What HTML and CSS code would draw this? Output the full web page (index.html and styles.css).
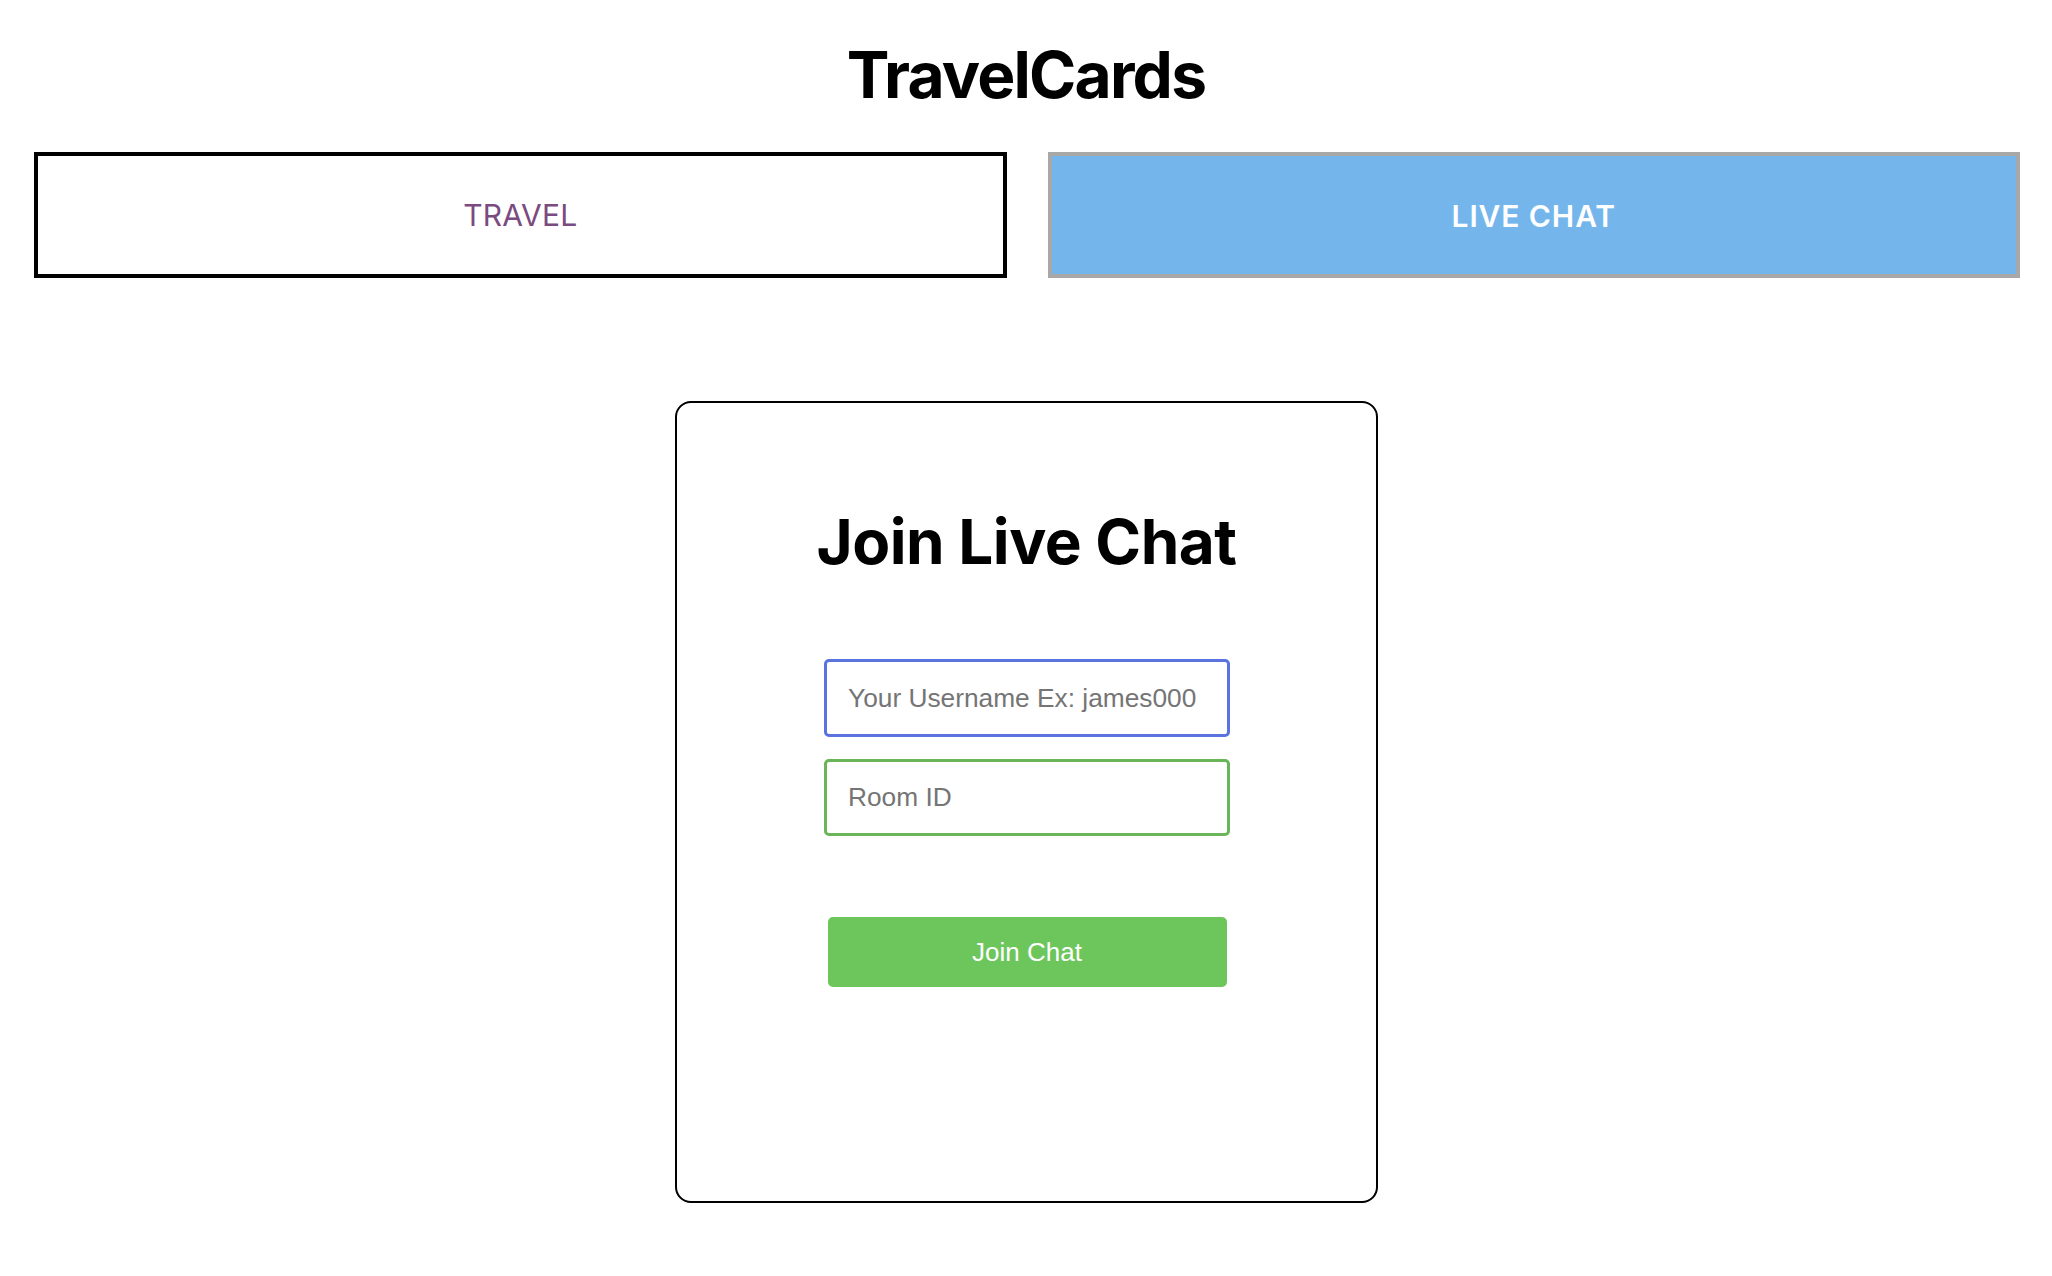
FILE: index.html
```html
<!DOCTYPE html>
<html lang="en">
<head>
<meta charset="utf-8">
<title>TravelCards</title>
<link rel="stylesheet" href="styles.css">
</head>
<body>
<header class="site-header">
  <h1 class="site-title">TravelCards</h1>
</header>
<nav class="tabs">
  <button class="tab tab-travel" type="button">TRAVEL</button>
  <button class="tab tab-chat" type="button">LIVE CHAT</button>
</nav>
<main class="main">
  <section class="card">
    <h2 class="card-title">Join Live Chat</h2>
    <form class="join-form">
      <input class="field field-user" type="text" placeholder="Your Username Ex: james000">
      <input class="field field-room" type="text" placeholder="Room ID">
      <button class="join-btn" type="button">Join Chat</button>
    </form>
  </section>
</main>
</body>
</html>
```
FILE: styles.css
```css
* { box-sizing: border-box; }

html, body {
  margin: 0;
  padding: 0;
  background: #ffffff;
}

body {
  font-family: Inter, "Liberation Sans", sans-serif;
  color: #000;
}

.site-header {
  padding-top: 35px;
  display: flex;
  justify-content: center;
}

.site-title {
  margin: 0;
  font-family: Inter, sans-serif;
  font-weight: 700;
  font-size: 64px;
  line-height: 80px;
  letter-spacing: -1.8px;
}

.tabs {
  display: flex;
  gap: 41px;
  padding: 0 32px 0 34px;
  margin-top: 37px;
}

.tab {
  flex: 1 1 0;
  height: 126px;
  font-family: Inter, sans-serif;
  font-size: 30px;
  cursor: pointer;
  padding: 0;
}

.tab-travel {
  background: #ffffff;
  border: 4px solid #000000;
  color: #7a4a80;
  font-weight: 400;
  letter-spacing: 0.2px;
}

.tab-chat {
  background: #74b6ec;
  border: 4px solid #a8a8a8;
  color: #ffffff;
  font-weight: 600;
  letter-spacing: 0.9px;
  padding-top: 2px;
}

.main {
  display: flex;
  justify-content: center;
  padding-top: 123px;
  padding-left: 1px;
}

.card {
  width: 703px;
  height: 802px;
  border: 2px solid #000;
  border-radius: 16px;
  padding-top: 101px;
  display: flex;
  flex-direction: column;
  align-items: center;
}

.card-title {
  margin: 0;
  font-family: Inter, sans-serif;
  font-weight: 700;
  font-size: 62px;
  line-height: 76px;
  letter-spacing: -0.5px;
}

.join-form {
  margin-top: 79px;
  display: flex;
  flex-direction: column;
  align-items: center;
  padding-left: 1px;
}

.field {
  width: 406px;
  height: 78px;
  border-radius: 5px;
  border: 3px solid #5b73df;
  padding: 0 0 0 21px;
  font-family: "Liberation Sans", Arial, sans-serif;
  font-size: 26.3px;
  color: #333;
  background: #fff;
  outline: none;
}

.field::placeholder {
  color: #757575;
}

.field-room {
  margin-top: 22px;
  height: 77px;
  border-color: #6ab55a;
}

.join-btn {
  margin-top: 81px;
  width: 399px;
  height: 70px;
  border: none;
  border-radius: 5px;
  background: #6dc65c;
  color: #ffffff;
  font-family: "Liberation Sans", Arial, sans-serif;
  font-size: 26px;
  cursor: pointer;
}
```
